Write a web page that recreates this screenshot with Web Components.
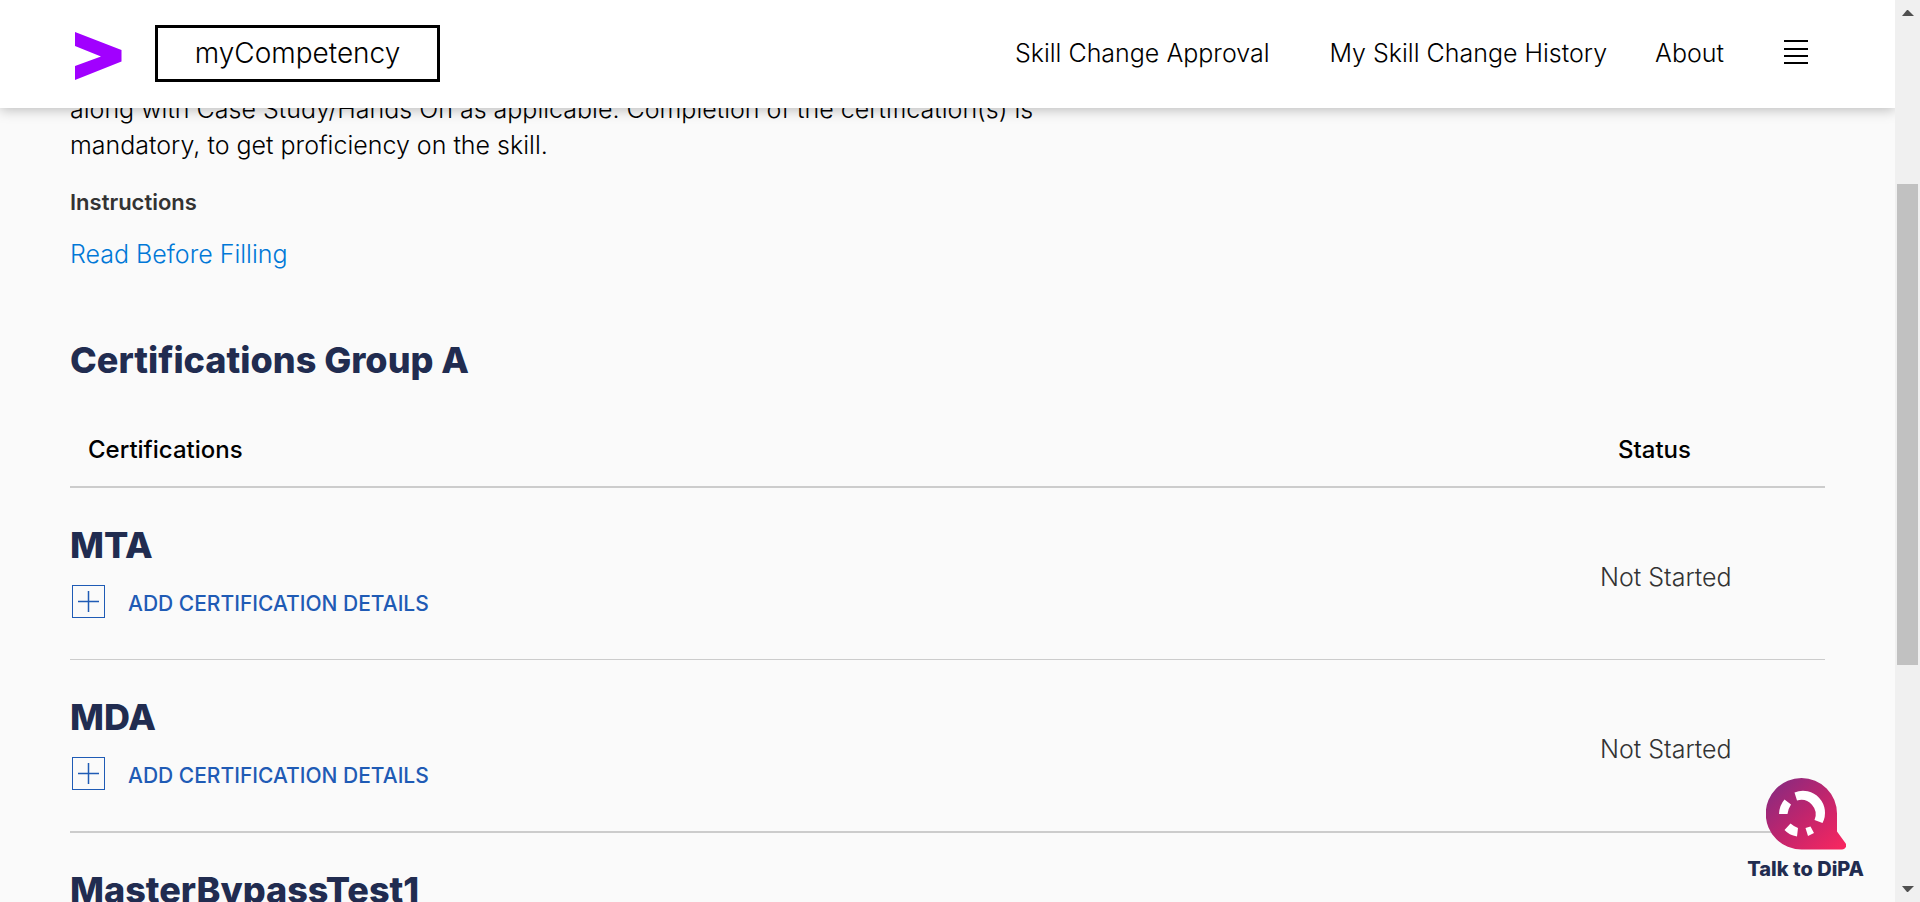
<!DOCTYPE html>
<html lang="en">
<head>
<meta charset="utf-8">
<title>myCompetency</title>
<style>
  html, body { height: 100%; margin: 0; }
  body {
    background: #fafafa;
    color: #000;
    font-family: Inter, "Liberation Sans", sans-serif;
    font-size: 25px;
    font-weight: 300;
    line-height: 36px;
    overflow: hidden;
  }
</style>
</head>
<body>
<competency-app></competency-app>

<script>
const define = (name, html, setup) => {
  const template = document.createElement('template');
  template.innerHTML = html;
  customElements.define(name, class extends HTMLElement {
    constructor() {
      super();
      this.attachShadow({ mode: 'open' }).append(template.content.cloneNode(true));
    }
    connectedCallback() { if (setup) setup(this.shadowRoot, this); }
  });
};

define('nav-link', `
  <style>
    :host { display: block; }
    a { color: #000; text-decoration: none; white-space: nowrap; }
  </style>
  <a href="#"><slot></slot></a>
`);

define('site-header', `
  <style>
    :host { display: block; position: relative; z-index: 2; background: #fff;
            box-shadow: 0 2px 12px rgba(0,0,0,.25); }
    header { display: flex; align-items: center; box-sizing: border-box; height: 108px; padding: 0 87px 2px 75px; }
    .logo { display: block; width: 47px; height: 48px; margin: 6px 33px 0 0; }
    .logo svg { display: block; }
    .brand { box-sizing: border-box; width: 285px; height: 57px; border: 3px solid #000;
             color: #000; font-size: 28px; line-height: 51px; text-align: center; text-decoration: none; }
    nav { display: flex; align-items: center; gap: 60px; margin-left: auto; }
    nav-link + nav-link + nav-link { margin-left: -12px; }
    button { display: block; width: 24px; height: 26px; margin: 0; padding: 0; border: 0; background: none; }
    button svg { display: block; }
  </style>
  <header>
    <a class="logo" href="#" aria-label="Home">
      <svg width="47" height="48" viewBox="0 0 47 48"><path fill="#a100ff" d="M0 0 46.500 18V29.500L0 48V34L26 24.500 0 14Z"/></svg>
    </a>
    <a class="brand" href="#">myCompetency</a>
    <nav>
      <nav-link>Skill Change Approval</nav-link>
      <nav-link>My Skill Change History</nav-link>
      <nav-link>About</nav-link>
      <button type="button" aria-label="Menu">
        <svg width="24" height="26" viewBox="0 0 24 26"><path fill="#000" d="M0 0h24v2H0zM0 8h24v2H0zM0 15h24v2H0zM0 22h24v2H0z"/></svg>
      </button>
    </nav>
  </header>
`);

define('skill-intro', `
  <style>
    :host { display: block; }
    p { width: 980px; max-width: 100%; margin: 0 0 27px; }
    h4 { margin: 0 0 22px; color: #333; font-size: 22px; font-weight: 600; line-height: 24px; }
    a { display: block; width: fit-content; color: #0078d7; text-decoration: none; }
  </style>
  <p>along with Case Study/Hands On as applicable. Completion of the certification(s) is mandatory, to get proficiency on the skill.</p>
  <h4>Instructions</h4>
  <a href="#">Read Before Filling</a>
`);

define('add-details', `
  <style>
    :host { display: block; }
    button { display: flex; align-items: center; gap: 23px; margin: 0; padding: 0 0 0 2px; border: 0;
             background: none; color: #1f5bb5; font: inherit; font-size: 21px; font-weight: 500;
             line-height: 30px; text-transform: uppercase; }
    span { padding-top: 4px; }
    svg { display: block; }
  </style>
  <button type="button">
    <svg width="33" height="34" viewBox="0 0 33 34" fill="none" stroke="#1f5bb5" aria-hidden="true">
      <rect x=".5" y=".5" width="32" height="32"/>
      <path stroke-width="1.500" d="M6 16.500h21M16.500 6v21"/>
    </svg>
    <span><slot></slot></span>
  </button>
`);

define('certification-table', `
  <style>
    :host { display: block; }
    h2 { margin: 0 0 48px; color: #212c50; font-size: 36px; font-weight: 800; line-height: 48px; }
    table { width: 100%; border-collapse: separate; border-spacing: 0; }
    th, td { padding: 0; text-align: left; }
    thead th { padding-bottom: 18px; border-bottom: 2px solid #ccc; font-size: 24px; font-weight: 500; }
    thead th:first-child { padding-left: 18px; }
    thead th:last-child { width: 207px; }
    tbody th, tbody td { border-bottom: 1px solid #ccc; }
    tbody tr:nth-child(even) > * { border-bottom-width: 2px; }
    tbody th { padding: 33px 0 40px; font-weight: inherit; }
    .status { display: block; margin-left: -18px; padding-top: 6px; color: #333; }
    h3 { margin: 0 0 16px; color: #212c50; font-size: 36px; font-weight: 800; line-height: 48px; }
  </style>
  <h2><slot></slot></h2>
  <table>
    <thead><tr><th scope="col">Certifications</th><th scope="col">Status</th></tr></thead>
    <tbody></tbody>
  </table>
`, (root, host) => {
  root.querySelector('tbody').innerHTML = host.getAttribute('items').split(',').map(name => `
    <tr>
      <th scope="row"><h3>${name}</h3><add-details>Add certification details</add-details></th>
      <td><span class="status">Not Started</span></td>
    </tr>`).join('');
});

define('chat-launcher', `
  <style>
    :host { display: block; position: absolute; right: 31px; bottom: 21px; z-index: 1; }
    button { display: flex; flex-direction: column; align-items: center; gap: 7px; margin: 0; padding: 0;
             border: 0; background: none; color: #212c50; font: inherit; font-size: 20px;
             font-weight: 800; line-height: 24px; white-space: nowrap; }
    svg { display: block; }
  </style>
  <button type="button">
    <svg width="80" height="72" viewBox="0 0 80 72" aria-hidden="true">
      <defs><linearGradient id="fill" x1="0" y1="0" x2="1" y2="1">
        <stop offset="0" stop-color="#7f2b83"/><stop offset=".5" stop-color="#c0256d"/><stop offset="1" stop-color="#fb265f"/>
      </linearGradient></defs>
      <path fill="url(#fill)" d="M35.500 0A35.500 35.500 0 0 1 71 35.500V53.500L79 64.500C82 68 79 71.500 76 71.500H35.500A35.750 35.750 0 0 1 35.500 0Z"/>
      <g fill="#fff">
        <path d="M28.500 14.500A22 22 0 0 1 56.500 45L48.500 42A14.500 14.500 0 0 0 31 22.500Z"/>
        <path d="M18.500 21.500 25 26.500Q22 31 21.500 36H13Q13.500 27 18.500 21.500Z"/>
        <path d="M18.500 52 24.500 45.500Q28 48.500 32 50L31 58.500Q23 57 18.500 52Z"/>
        <path d="M39.500 50 44.500 48.500 48 55 42 58Z"/>
      </g>
    </svg>
    <span><slot></slot></span>
  </button>
`);

define('scroll-rail', `
  <style>
    :host { display: grid; grid-template-rows: 26px 158fr 481fr 211fr 26px; box-sizing: border-box;
            width: 25px; background: #f0f0f0; }
    .thumb { grid-row: 3; margin: 0 2px; background: #c1c1c1; }
    svg { display: block; width: 25px; height: 26px; }
    .down { grid-row: 5; }
  </style>
  <svg viewBox="0 0 25 26"><path fill="#505050" d="M12 10h1l6 6H7z"/></svg>
  <div class="thumb"></div>
  <svg class="down" viewBox="0 0 25 26"><path fill="#505050" d="M7 10h12l-6 6h-1z"/></svg>
`);

define('competency-app', `
  <style>
    :host { display: grid; grid-template-columns: minmax(0, 1fr) auto; height: 100vh; }
    .page { position: relative; display: flex; flex-direction: column; min-width: 0; min-height: 0; overflow: hidden; }
    site-header { flex: none; }
    main { flex: 1; min-height: 0; padding: 0 70px; overflow: hidden; }
    skill-intro { margin: -17px 0 64px; }
  </style>
  <div class="page">
    <site-header></site-header>
    <main>
      <skill-intro></skill-intro>
      <certification-table items="MTA,MDA,MasterBypassTest1">Certifications Group A</certification-table>
    </main>
    <chat-launcher>Talk to DiPA</chat-launcher>
  </div>
  <scroll-rail aria-hidden="true"></scroll-rail>
`);
</script>
</body>
</html>
